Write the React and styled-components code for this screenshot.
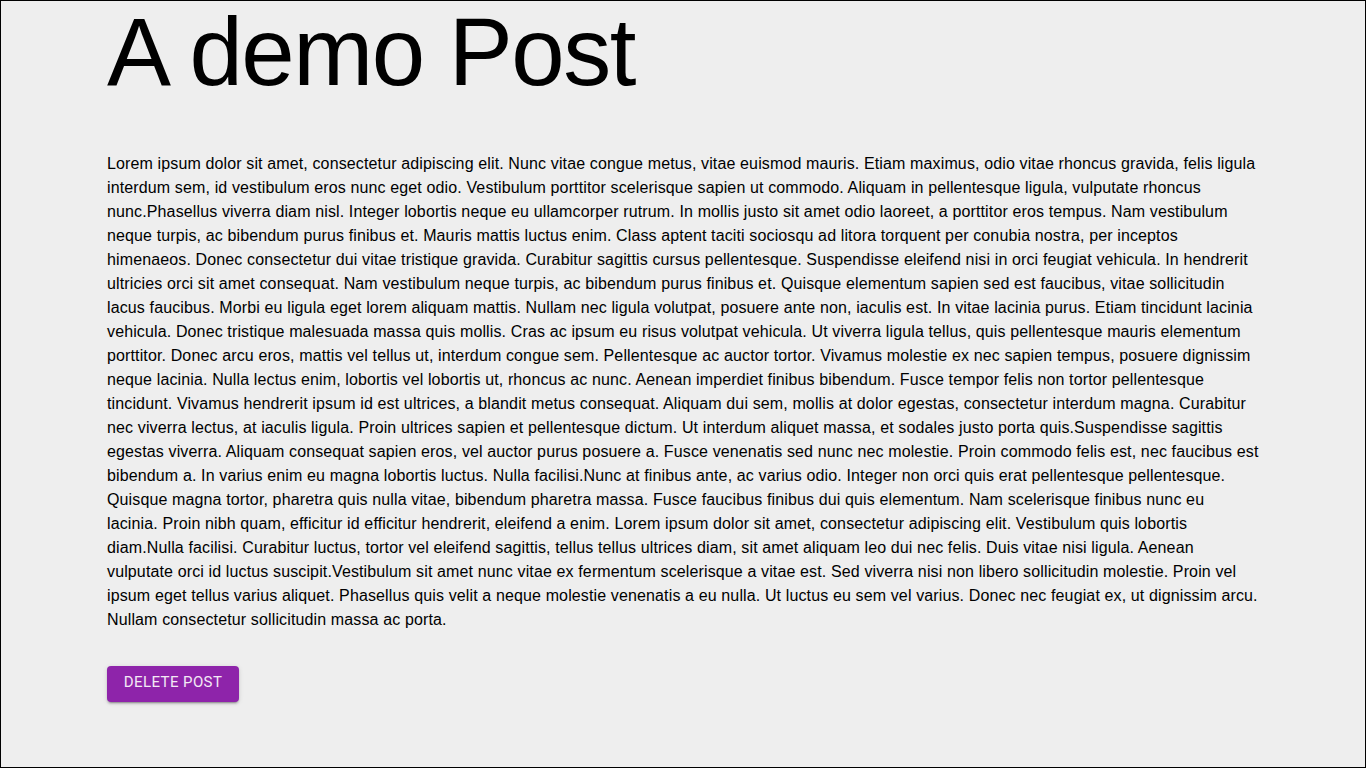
import styled, { createGlobalStyle } from "styled-components";

const GlobalStyle = createGlobalStyle`
    html, body {
        margin: 0;
        padding: 0;
        background: #eeeeee;
    }
    * {
        box-sizing: border-box;
    }
`;

const text = `Lorem ipsum dolor sit amet, consectetur adipiscing elit. Nunc vitae congue metus, vitae euismod mauris. Etiam maximus, odio vitae rhoncus gravida, felis ligula interdum sem, id vestibulum eros nunc eget odio. Vestibulum porttitor scelerisque sapien ut commodo. Aliquam in pellentesque ligula, vulputate rhoncus nunc.Phasellus viverra diam nisl. Integer lobortis neque eu ullamcorper rutrum. In mollis justo sit amet odio laoreet, a porttitor eros tempus. Nam vestibulum neque turpis, ac bibendum purus finibus et. Mauris mattis luctus enim. Class aptent taciti sociosqu ad litora torquent per conubia nostra, per inceptos himenaeos. Donec consectetur dui vitae tristique gravida. Curabitur sagittis cursus pellentesque. Suspendisse eleifend nisi in orci feugiat vehicula. In hendrerit ultricies orci sit amet consequat. Nam vestibulum neque turpis, ac bibendum purus finibus et. Quisque elementum sapien sed est faucibus, vitae sollicitudin lacus faucibus. Morbi eu ligula eget lorem aliquam mattis. Nullam nec ligula volutpat, posuere ante non, iaculis est. In vitae lacinia purus. Etiam tincidunt lacinia vehicula. Donec tristique malesuada massa quis mollis. Cras ac ipsum eu risus volutpat vehicula. Ut viverra ligula tellus, quis pellentesque mauris elementum porttitor. Donec arcu eros, mattis vel tellus ut, interdum congue sem. Pellentesque ac auctor tortor. Vivamus molestie ex nec sapien tempus, posuere dignissim neque lacinia. Nulla lectus enim, lobortis vel lobortis ut, rhoncus ac nunc. Aenean imperdiet finibus bibendum. Fusce tempor felis non tortor pellentesque tincidunt. Vivamus hendrerit ipsum id est ultrices, a blandit metus consequat. Aliquam dui sem, mollis at dolor egestas, consectetur interdum magna. Curabitur nec viverra lectus, at iaculis ligula. Proin ultrices sapien et pellentesque dictum. Ut interdum aliquet massa, et sodales justo porta quis.Suspendisse sagittis egestas viverra. Aliquam consequat sapien eros, vel auctor purus posuere a. Fusce venenatis sed nunc nec molestie. Proin commodo felis est, nec faucibus est bibendum a. In varius enim eu magna lobortis luctus. Nulla facilisi.Nunc at finibus ante, ac varius odio. Integer non orci quis erat pellentesque pellentesque. Quisque magna tortor, pharetra quis nulla vitae, bibendum pharetra massa. Fusce faucibus finibus dui quis elementum. Nam scelerisque finibus nunc eu lacinia. Proin nibh quam, efficitur id efficitur hendrerit, eleifend a enim. Lorem ipsum dolor sit amet, consectetur adipiscing elit. Vestibulum quis lobortis diam.Nulla facilisi. Curabitur luctus, tortor vel eleifend sagittis, tellus tellus ultrices diam, sit amet aliquam leo dui nec felis. Duis vitae nisi ligula. Aenean vulputate orci id luctus suscipit.Vestibulum sit amet nunc vitae ex fermentum scelerisque a vitae est. Sed viverra nisi non libero sollicitudin molestie. Proin vel ipsum eget tellus varius aliquet. Phasellus quis velit a neque molestie venenatis a eu nulla. Ut luctus eu sem vel varius. Donec nec feugiat ex, ut dignissim arcu. Nullam consectetur sollicitudin massa ac porta.`;

const App = () => {
    return (
        <Page>
            <GlobalStyle />
            <PostWrap>
                <Title>A demo Post</Title>
                <Body>{text}</Body>
                <DeleteButton type="button">Delete Post</DeleteButton>
            </PostWrap>
        </Page>
    );
};

export default App;

const Page = styled.div`
    min-height: 100vh;
    border: 1px solid #000;
    background: #eeeeee;
    font-family: "Liberation Sans", Arial, sans-serif;
    color: #000;
`;

const PostWrap = styled.article`
    width: 1152px;
    margin: 0 auto;
    padding-top: 3px;
    display: flex;
    flex-direction: column;
    align-items: flex-start;
`;

const Title = styled.h1`
    margin: 0 0 52px;
    font-size: 96px;
    font-weight: 300;
    line-height: 96px;
    letter-spacing: -1.5px;
`;

const Body = styled.p`
    margin: 0 0 34px;
    font-size: 16px;
    line-height: 24px;
    letter-spacing: 0.13px;
`;

const DeleteButton = styled.button`
    height: 36px;
    min-width: 132px;
    padding: 4px 16px 8px;
    border: 0;
    border-radius: 4px;
    background: #8e24aa;
    color: #f3e9f5;
    font-family: Roboto, "Liberation Sans", Arial, sans-serif;
    font-size: 15px;
    font-weight: 400;
    line-height: 24px;
    letter-spacing: 0.43px;
    text-transform: uppercase;
    box-shadow: 0 3px 1px -2px rgba(0, 0, 0, 0.2), 0 2px 2px 0 rgba(0, 0, 0, 0.14), 0 1px 5px 0 rgba(0, 0, 0, 0.12);
    cursor: pointer;
`;
